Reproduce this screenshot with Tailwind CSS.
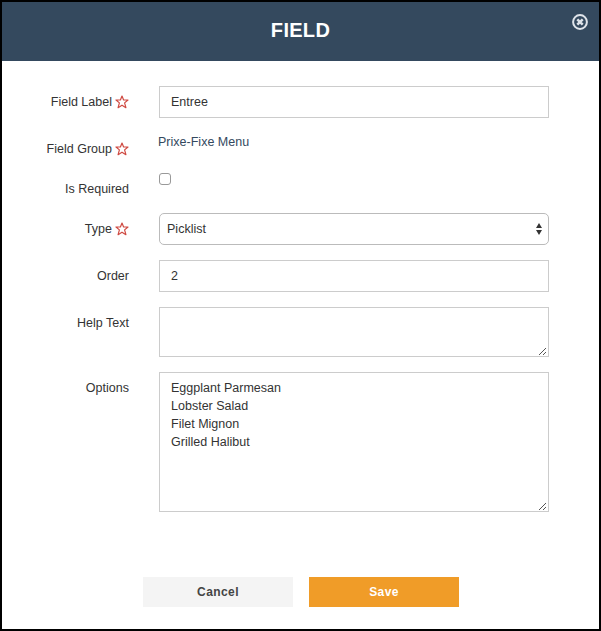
<!DOCTYPE html>
<html lang="en">
<head>
<meta charset="utf-8">
<title>Field</title>
<script src="https://cdn.jsdelivr.net/npm/@tailwindcss/browser@4"></script>
</head>
<body class="bg-white">
<svg class="hidden">
  <symbol id="star" viewBox="0 0 14 14"><path d="M7 1.1 8.6 5H13L9.6 7.9 10.9 12.7 7 10.2 3.1 12.7 4.4 7.9 1 5H5.4Z" fill="none" stroke="#cf4a42" stroke-width="1.2" stroke-linejoin="round"/></symbol>
  <symbol id="grip" viewBox="0 0 8 8"><path d="M0 7h1v1H0zM1 6h1v1H1zM2 5h1v1H2zM3 4h1v1H3zM4 3h1v1H4zM5 2h1v1H5zM6 1h1v1H6zM4 7h1v1H4zM5 6h1v1H5zM6 5h1v1H6z" fill="#555"/></symbol>
</svg>
<main class="flex h-[631px] w-[601px] flex-col border-2 border-black font-['Liberation_Sans',Arial,sans-serif] text-[12.5px] leading-[18px] tracking-[0.01px] text-[#333]">
  <header class="relative flex h-[59px] shrink-0 items-center justify-center bg-[#34495e]">
    <h1 class="pb-[3px] text-[20px] font-bold leading-6 tracking-[0.3px] text-white">FIELD</h1>
    <button class="absolute right-[11px] top-3" aria-label="Close">
      <svg class="block size-4" viewBox="0 0 16 16" fill="none" stroke="#dfe4ea"><circle cx="8" cy="8" r="6.9" stroke-width="2"/><path d="M5.3 5.3l5.4 5.4M10.7 5.3l-5.4 5.4" stroke-width="2.5"/></svg>
    </button>
  </header>
  <form class="grid grid-cols-[127px_390px] gap-x-[30px] gap-y-[15px] pt-[25px]">
    <label class="flex h-8 items-center justify-end gap-[3px]">Field Label <svg class="size-[14px]"><use href="#star"/></svg></label>
    <div class="flex h-8 items-center border border-[#ccc] pl-[11px]">Entree</div>

    <label class="flex h-[25px] items-start justify-end gap-[3px] pt-[7px]">Field Group <svg class="mt-[2px] size-[14px]"><use href="#star"/></svg></label>
    <div class="-ml-px text-[#34495e]">Prixe-Fixe Menu</div>

    <label class="h-[25px] pt-[7px] text-right">Is Required</label>
    <div><div class="size-3 rounded-[3px] border border-[#999] bg-white"></div></div>

    <label class="flex h-8 items-center justify-end gap-[3px]">Type <svg class="size-[14px]"><use href="#star"/></svg></label>
    <div class="flex h-8 items-center justify-between rounded-[5px] border border-[#bbb] pl-[7px] pr-[6px]">Picklist
      <svg class="h-3 w-[6px]" viewBox="0 0 6 12" fill="#333"><path d="M3 0 6 5H0ZM3 12 0 7H6Z"/></svg>
    </div>

    <label class="flex h-8 items-center justify-end">Order</label>
    <div class="flex h-8 items-center border border-[#ccc] pl-[11px]">2</div>

    <label class="pt-[7px] text-right">Help Text</label>
    <div class="flex h-[50px] items-end justify-end border border-[#ccc] p-px"><svg class="size-2"><use href="#grip"/></svg></div>

    <label class="pt-[7px] text-right">Options</label>
    <div class="flex h-[140px] justify-between border border-[#ccc] p-px">
      <div class="whitespace-pre pl-[10px] pt-[5px]">Eggplant Parmesan
Lobster Salad
Filet Mignon
Grilled Halibut</div>
      <svg class="size-2 self-end"><use href="#grip"/></svg>
    </div>
  </form>
  <footer class="mt-[65px] flex gap-4 pl-[141px] text-[12px] font-bold tracking-[0.4px]">
    <button class="h-[30px] w-[150px] bg-[#f4f4f4] text-[#444]">Cancel</button>
    <button class="h-[30px] w-[150px] bg-[#f09c28] text-white">Save</button>
  </footer>
</main>
</body>
</html>
